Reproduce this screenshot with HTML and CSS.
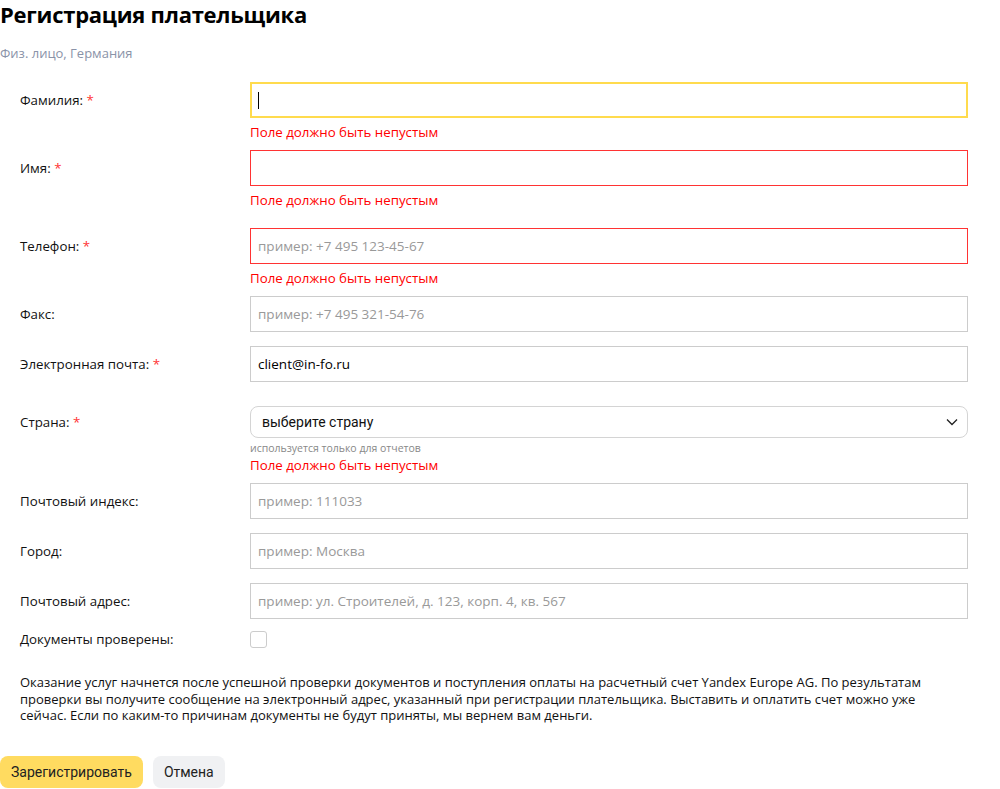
FILE: index.html
```html
<!DOCTYPE html>
<html lang="ru">
<head>
<meta charset="utf-8">
<link rel="stylesheet" href="styles.css">
</head>
<body>
<h1 class="title">Регистрация плательщика</h1>
<div class="subtitle">Физ. лицо, Германия</div>
<form class="form">
  <div class="row r1">
    <label class="label">Фамилия: <span class="req">*</span></label>
    <div class="field">
      <div class="input focus"><span class="caret"></span></div>
      <div class="error">Поле должно быть непустым</div>
    </div>
  </div>
  <div class="row r2">
    <label class="label">Имя: <span class="req">*</span></label>
    <div class="field">
      <div class="input invalid"></div>
      <div class="error">Поле должно быть непустым</div>
    </div>
  </div>
  <div class="row r3">
    <label class="label">Телефон: <span class="req">*</span></label>
    <div class="field">
      <div class="input invalid"><span class="ph">пример: +7 495 123-45-67</span></div>
      <div class="error">Поле должно быть непустым</div>
    </div>
  </div>
  <div class="row r4">
    <label class="label">Факс:</label>
    <div class="field">
      <div class="input"><span class="ph">пример: +7 495 321-54-76</span></div>
    </div>
  </div>
  <div class="row r5">
    <label class="label">Электронная почта: <span class="req">*</span></label>
    <div class="field">
      <div class="input"><span class="val">client@in-fo.ru</span></div>
    </div>
  </div>
  <div class="row r6">
    <label class="label">Страна: <span class="req">*</span></label>
    <div class="field">
      <div class="select"><span>выберите страну</span>
        <svg class="chev" width="12" height="8" viewBox="0 0 12 8"><path d="M1 1.5l5 5 5-5" fill="none" stroke="#222" stroke-width="1.3"/></svg>
      </div>
      <div class="hint">используется только для отчетов</div>
      <div class="error e6">Поле должно быть непустым</div>
    </div>
  </div>
  <div class="row r7">
    <label class="label">Почтовый индекс:</label>
    <div class="field">
      <div class="input"><span class="ph">пример: 111033</span></div>
    </div>
  </div>
  <div class="row r8">
    <label class="label">Город:</label>
    <div class="field">
      <div class="input"><span class="ph">пример: Москва</span></div>
    </div>
  </div>
  <div class="row r9">
    <label class="label">Почтовый адрес:</label>
    <div class="field">
      <div class="input"><span class="ph">пример: ул. Строителей, д. 123, корп. 4, кв. 567</span></div>
    </div>
  </div>
  <div class="row r10">
    <label class="label">Документы проверены:</label>
    <div class="field">
      <span class="checkbox"></span>
    </div>
  </div>
  <p class="note">Оказание услуг начнется после успешной проверки документов и поступления оплаты на расчетный счет Yandex Europe AG. По результатам проверки вы получите сообщение на электронный адрес, указанный при регистрации плательщика. Выставить и оплатить счет можно уже сейчас. Если по каким-то причинам документы не будут приняты, мы вернем вам деньги.</p>
  <div class="actions">
    <button type="button" class="btn primary">Зарегистрировать</button>
    <button type="button" class="btn">Отмена</button>
  </div>
</form>
</body>
</html>
```
FILE: styles.css
```css
html, body {
  margin: 0;
  padding: 0;
  background: #fff;
}
body {
  font-family: "Open Sans", "Noto Sans", sans-serif;
  color: #000;
  width: 1000px;
}
.title {
  margin: 0;
  padding-top: 1px;
  font-size: 22px;
  line-height: 26px;
  font-weight: 700;
  letter-spacing: -0.25px;
}
.subtitle {
  margin-top: 17px;
  font-size: 13px;
  line-height: 18px;
  color: #8a93a8;
}
.form {
  margin-top: 20px;
}
.row {
  display: grid;
  grid-template-columns: 250px 718px;
  align-items: start;
}
.label {
  padding-left: 20px;
  font-size: 13.3px;
  line-height: 36px;
  color: #111;
}
.req {
  color: #f33;
}
.input {
  box-sizing: border-box;
  height: 36px;
  border: 1px solid #ccc;
  padding: 0 7px;
  display: flex;
  align-items: center;
  font-size: 13.5px;
}
.input.focus {
  border: 2px solid #ffdb4d;
  padding: 0 6px;
}
.input.invalid {
  border-color: #f33;
}
.caret {
  display: inline-block;
  width: 1px;
  height: 17px;
  background: #000;
}
.ph {
  color: #999;
}
.val {
  color: #000;
}
.error {
  margin-top: 5px;
  font-size: 13.3px;
  line-height: 18px;
  color: #f00;
}
.r2 { margin-top: 9px; }
.r3 { margin-top: 19px; }
.r4 { margin-top: 9px; }
.r5 { margin-top: 14px; }
.r6 { margin-top: 24px; }
.r6 .label { line-height: 32px; }
.select {
  box-sizing: border-box;
  height: 32px;
  border: 1px solid #d4d4d4;
  border-radius: 8px;
  padding: 0 9px 0 11px;
  display: flex;
  align-items: center;
  justify-content: space-between;
  font-family: Roboto, "Liberation Sans", sans-serif;
  font-size: 14px;
  color: #111;
}
.hint {
  margin-top: 3px;
  font-size: 10.5px;
  line-height: 14px;
  color: #888;
}
.error.e6 {
  margin-top: 1px;
}
.r7 { margin-top: 9px; }
.r8 { margin-top: 14px; }
.r9 { margin-top: 14px; }
.r10 { margin-top: 5px; }
.r10 .label { line-height: 30px; }
.checkbox {
  display: block;
  margin-top: 7px;
  width: 15px;
  height: 15px;
  border: 1px solid #ccc;
  border-radius: 3px;
}
.note {
  margin: 20px 0 0;
  padding-left: 20px;
  padding-right: 48px;
  font-size: 13px;
  line-height: 16.5px;
  color: #111;
}
.actions {
  margin-top: 32px;
  display: flex;
  gap: 10px;
}
.btn {
  height: 32px;
  border: 0;
  border-radius: 8px;
  padding: 0 11px;
  font-family: Roboto, "Liberation Sans", sans-serif;
  font-size: 14px;
  color: #222;
  background: #f0f1f3;
}
.btn.primary {
  background: #ffdb60;
}
```
